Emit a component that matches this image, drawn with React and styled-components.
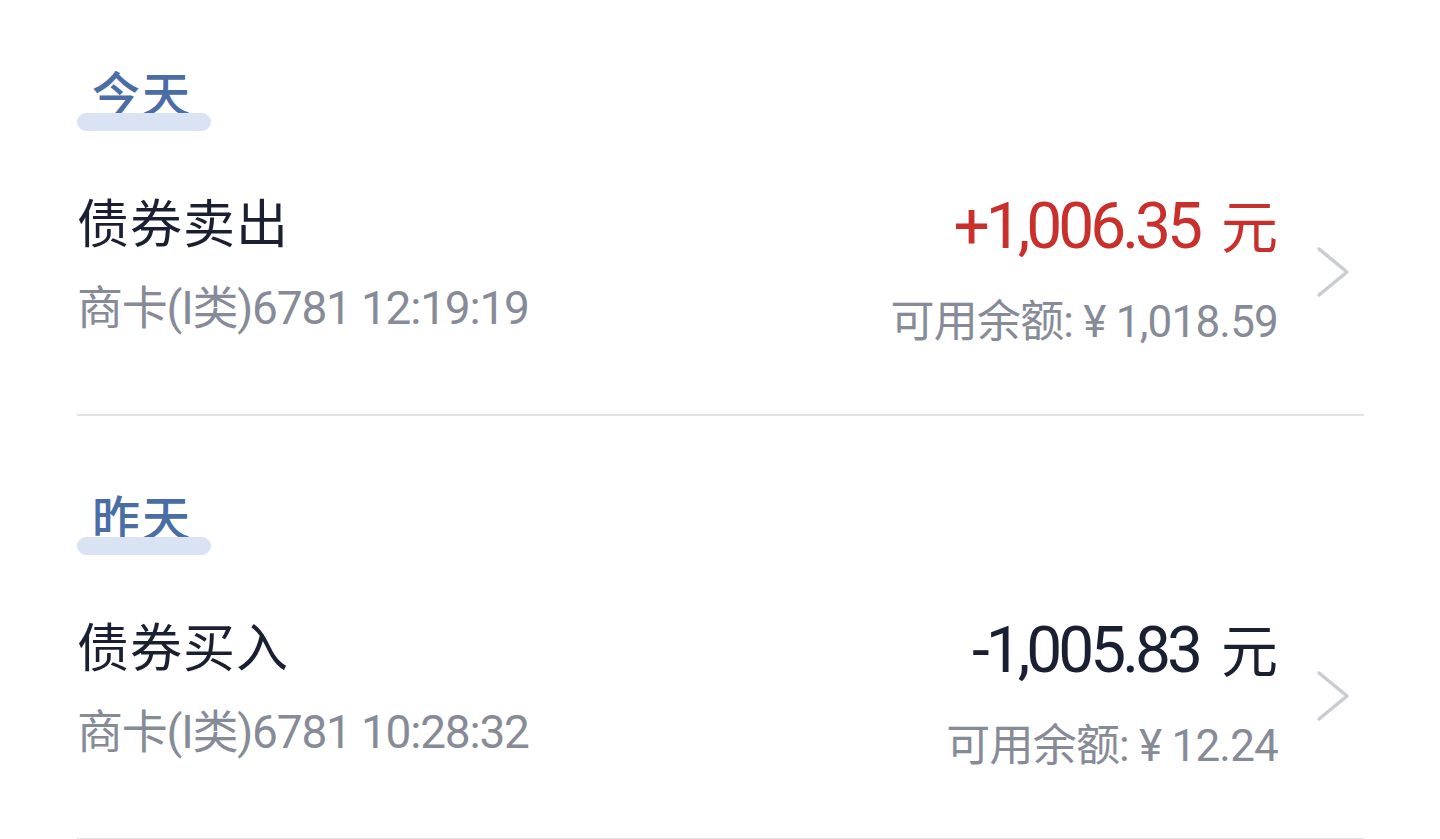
import React from "react";
import styled, { createGlobalStyle } from "styled-components";

const GlobalStyle = createGlobalStyle`
  html, body {
    margin: 0;
    padding: 0;
    background: #ffffff;
  }
  body {
    font-family: Roboto, "Noto Sans CJK SC", sans-serif;
    -webkit-font-smoothing: antialiased;
  }
`;

const Page = styled.div`
  width: 1440px;
  height: 839px;
  overflow: hidden;
  box-sizing: border-box;
  padding: 0 76px 0 77px;
  background: #ffffff;
`;

const Section = styled.section`
  display: flex;
  flex-direction: column;
  padding-top: 66px;

  & + & {
    padding-top: 74px;
  }
`;

const DayLabel = styled.div`
  position: relative;
  align-self: flex-start;
  width: 134px;
  height: 62px;
`;

const DayText = styled.span`
  display: block;
  padding-left: 15px;
  font-family: "Noto Sans CJK SC", sans-serif;
  font-size: 48px;
  line-height: 50px;
  font-weight: 500;
  color: #4a6da6;
  letter-spacing: 2px;
`;

const DayMark = styled.span`
  position: absolute;
  left: 0;
  top: 47px;
  width: 134px;
  height: 18px;
  border-radius: 9px;
  background: #dae3f4;
`;

const Row = styled.div`
  display: flex;
  align-items: flex-start;
  padding: 60px 0 66px;
  border-bottom: 2px solid #e4e4e6;
`;

const Info = styled.div`
  flex: 1;
  display: flex;
  flex-direction: column;
  gap: 30px;
  padding-top: 2px;
`;

const Title = styled.div`
  font-family: "Noto Sans CJK SC", sans-serif;
  font-size: 52px;
  line-height: 62px;
  color: #1a2032;
  letter-spacing: 1px;
`;

const Meta = styled.div`
  font-size: 46px;
  line-height: 52px;
  color: #878b98;
  letter-spacing: -1.2px;
`;

const Figures = styled.div`
  display: flex;
  flex-direction: column;
  align-items: flex-end;
  gap: 38px;
  padding-top: 4px;
`;

const Amount = styled.div`
  font-size: 64px;
  line-height: 62px;
  letter-spacing: -4px;
  color: ${(p) => (p.$income ? "#c9302c" : "#1a2032")};
`;

const Unit = styled.span`
  font-family: "Noto Sans CJK SC", sans-serif;
  font-size: 57px;
  margin-left: 22px;
  letter-spacing: 0;
`;

const Balance = styled.div`
  font-size: 44px;
  line-height: 52px;
  color: #878b98;
  letter-spacing: -0.8px;
`;

const Chevron = styled.svg`
  flex: none;
  align-self: center;
  width: 34px;
  height: 52px;
  margin: 8px 14px 0 38px;
`;

const records = [
  {
    day: "今天",
    title: "债券卖出",
    meta: "商卡(I类)6781 12:19:19",
    amount: "+1,006.35",
    income: true,
    balance: "可用余额: ¥ 1,018.59",
  },
  {
    day: "昨天",
    title: "债券买入",
    meta: "商卡(I类)6781 10:28:32",
    amount: "-1,005.83",
    income: false,
    balance: "可用余额: ¥ 12.24",
  },
];

export default function App() {
  return (
    <>
      <GlobalStyle />
      <Page>
        {records.map((r) => (
          <Section key={r.day}>
            <DayLabel>
              <DayText>{r.day}</DayText>
              <DayMark />
            </DayLabel>
            <Row>
              <Info>
                <Title>{r.title}</Title>
                <Meta>{r.meta}</Meta>
              </Info>
              <Figures>
                <Amount $income={r.income}>
                  {r.amount}
                  <Unit>元</Unit>
                </Amount>
                <Balance>{r.balance}</Balance>
              </Figures>
              <Chevron viewBox="0 0 34 52" fill="none">
                <path
                  d="M3 3 L31 26 L3 49"
                  stroke="#c9ccd2"
                  strokeWidth="3.5"
                  strokeLinecap="round"
                  strokeLinejoin="round"
                />
              </Chevron>
            </Row>
          </Section>
        ))}
      </Page>
    </>
  );
}
